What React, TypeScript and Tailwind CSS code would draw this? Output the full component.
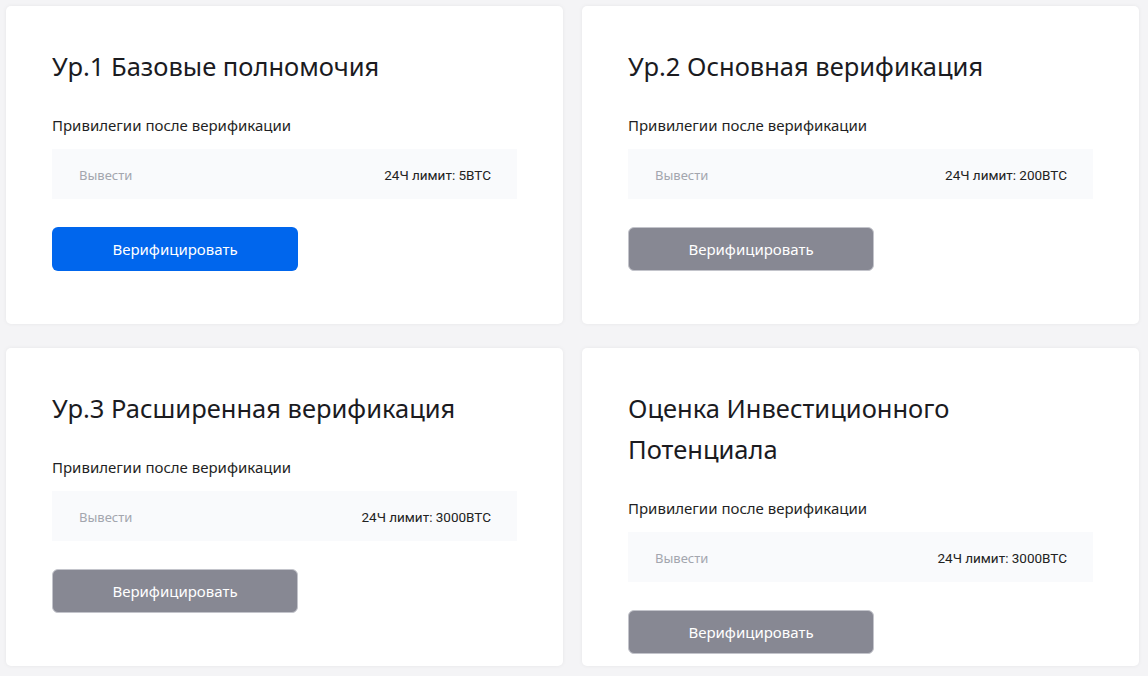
const levels = [
  { title: "Ур.1 Базовые полномочия", limit: "24Ч лимит: 5BTC", active: true },
  { title: "Ур.2 Основная верификация", limit: "24Ч лимит: 200BTC", active: false },
  { title: "Ур.3 Расширенная верификация", limit: "24Ч лимит: 3000BTC", active: false },
  { title: "Оценка Инвестиционного Потенциала", limit: "24Ч лимит: 3000BTC", active: false },
];

function LevelCard({ title, limit, active }: { title: string; limit: string; active: boolean }) {
  return (
    <div className="h-[318px] bg-white rounded-[5px] shadow-[0_0_4px_rgba(0,0,0,0.06)] px-[46px] pt-[40px]">
      <h2 className="text-[25.5px] leading-[41px] text-[#1b1b1f] font-normal max-w-[440px]">{title}</h2>
      <p className="mt-[26px] text-[15px] leading-6 text-[#1f1f24]">Привилегии после верификации</p>
      <div className="mt-3 h-[50px] bg-[#f9fafc] flex items-center justify-between pl-[27px] pr-[26px] pt-[3px]">
        <span className="text-[13px] text-[#a3a6ae]">Вывести</span>
        <span className="text-[13.5px] text-[#222] font-['Roboto',sans-serif]">{limit}</span>
      </div>
      {active ? (
        <button className="mt-7 w-[246px] h-[44px] rounded-md bg-[#0066ed] text-white text-[15px]">
          Верифицировать
        </button>
      ) : (
        <button className="mt-7 w-[246px] h-[44px] rounded-md bg-[#878893] border border-[#c3c4cb] text-white text-[15px]">
          Верифицировать
        </button>
      )}
    </div>
  );
}

export default function App() {
  return (
    <div className="min-h-[676px] bg-[#f4f4f6] pl-[6px] pt-[6px] font-['Noto_Sans',sans-serif]">
      <div className="grid grid-cols-[557px_557px] gap-x-[19px] gap-y-6">
        {levels.map((l) => (
          <LevelCard key={l.title} {...l} />
        ))}
      </div>
    </div>
  );
}
